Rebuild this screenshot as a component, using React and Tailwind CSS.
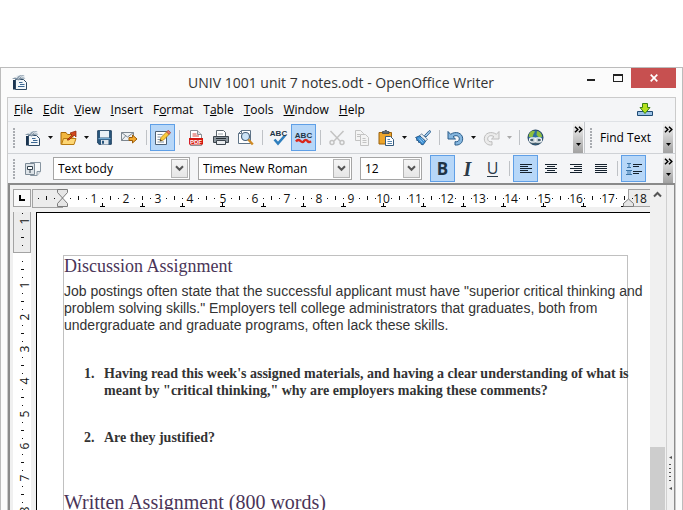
import React from "react";

const range = (n) => Array.from({ length: n }, (_, i) => i);

function Underlined({ text, at = 0 }) {
  return (
    <span className="whitespace-pre">
      {text.slice(0, at)}
      <span className="underline underline-offset-1">{text[at]}</span>
      {text.slice(at + 1)}
    </span>
  );
}

function Grip() {
  return (
    <div className="flex w-[11px] shrink-0 flex-col items-center justify-center gap-px">
      {range(7).map((i) => (
        <span key={i} className="h-[2px] w-[2px] bg-[#a9acb1]" />
      ))}
    </div>
  );
}

function Sep() {
  return (
    <div className="flex w-2 shrink-0 items-center justify-center">
      <span className="h-[15px] w-px bg-[#bfc2c6]" />
    </div>
  );
}

function Tool({ label, active, children }) {
  return (
    <button
      type="button"
      aria-label={label}
      aria-pressed={active ? true : undefined}
      className={
        "flex h-[27px] w-[25px] shrink-0 items-center justify-center border " +
        (active ? "border-[#5f9fe6] bg-[#b7d7f8]" : "border-transparent")
      }
    >
      {children}
    </button>
  );
}

function Drop({ label, dim }) {
  return (
    <button type="button" aria-label={label} className="flex h-[27px] w-[11px] shrink-0 items-center justify-center">
      <svg width="5" height="3" viewBox="0 0 5 3">
        <path d="M0 0h5L2.5 3z" fill={dim ? "#a9a9a9" : "#111"} />
      </svg>
    </button>
  );
}

function More({ label }) {
  return (
    <button
      type="button"
      aria-label={label}
      className="flex w-[10px] shrink-0 flex-col items-center justify-between self-stretch bg-linear-to-b from-[#f6f6f6] to-[#a2a2a2] pt-1 pb-[7px]"
    >
      <svg width="9" height="7" viewBox="0 0 9 7" fill="none" stroke="#000" strokeWidth="1.500">
        <path d="M1 .7l2.800 2.800L1 6.300M5 .7l2.800 2.800L5 6.300" />
      </svg>
      <svg width="5" height="3" viewBox="0 0 5 3">
        <path d="M0 0h5L2.500 3z" fill="#000" />
      </svg>
    </button>
  );
}

function Combo({ label, value, width }) {
  return (
    <div className={"relative flex h-[23px] shrink-0 items-center border border-[#a5a5a5] bg-white " + width}>
      <select
        aria-label={label}
        defaultValue={value}
        className="h-[21px] w-full appearance-none bg-transparent pl-1 text-[12px] leading-5 text-black outline-none"
      >
        <option>{value}</option>
      </select>
      <span className="pointer-events-none absolute inset-y-px right-px flex w-[17px] items-center justify-center border border-[#b4b4b4] bg-linear-to-b from-[#f5f5f5] to-[#e6e6e6]">
        <svg width="9" height="7" viewBox="0 0 9 7" fill="none" stroke="#555" strokeWidth="2">
          <path d="M1 1.200l3.500 3.600L8 1.200" />
        </svg>
      </span>
    </div>
  );
}

/* ---------- icons ---------- */

function WriterIcon() {
  return (
    <svg width="15" height="16" viewBox="0 0 15 16">
      <path d="M4.500 1.500h8v4h-8z" fill="#dfe6ec" />
      <path d="M1 6h3v9.500H1z" fill="#1b3450" />
      <path d="M3.500 5.500h8l3 3v7h-11z" fill="#f3f7fa" stroke="#2f4a64" />
      <path d="M7 8.500h3.500M8 10.500h4.500M6 12.500h6.500" stroke="#3c6893" />
      <path d="M0 5c1.600-1.600 3.200-2 5-1C6.200 1.500 8.800.4 12.500 1.200 10.400 2 9.300 2.800 8.600 4.200 10.300 3.300 12.200 3.400 13.500 4.600 11 4.400 8.600 5 6.600 6.600 4.800 5.200 2.500 4.700 0 5z" fill="#8496a6" />
      <path d="M6.500 4.500C7.500 2.800 9 2 10.500 1.900" fill="none" stroke="#eef2f5" strokeWidth=".9" />
    </svg>
  );
}

function OpenIcon() {
  return (
    <svg width="17" height="16" viewBox="0 0 17 16">
      <path d="M1 14.500V2.500h5l1.500 2H13v3" fill="#f2b73f" stroke="#a86a08" />
      <path d="M1.500 14.500l2-6h12.500l-2 6z" fill="#fdd673" stroke="#b87a10" />
      <path d="M7 10L12 5 10 3 16 1v6l-2-2-5 5z" fill="#d3481d" stroke="#8c2406" strokeWidth=".7" />
    </svg>
  );
}

function SaveIcon() {
  return (
    <svg width="15" height="15" viewBox="0 0 15 15">
      <path d="M.7.700h13.600v13.600H2L.7 13z" fill="#2d5a80" stroke="#1d3f5f" />
      <path d="M3 1h9v6.500H3z" fill="#e9f0f6" />
      <path d="M1.500 8h12v1.200h-12z" fill="#74a9d0" />
      <path d="M4 10h7.500v4.500H4z" fill="#dfe6ec" />
      <path d="M5 10.800h2v3H5z" fill="#27557d" />
    </svg>
  );
}

function MailIcon() {
  return (
    <svg width="17" height="13" viewBox="0 0 17 13">
      <path d="M.5 1.500h12v8H.5z" fill="#eef1f4" stroke="#7d8790" />
      <path d="M.5 1.500l6 4.500 6-4.500M.5 9.500l4-4.500" fill="none" stroke="#7d8790" />
      <path d="M8 6.500h3.500V4l4.500 4-4.500 4V9.500H8z" fill="#f3aa2f" stroke="#9c5c08" />
    </svg>
  );
}

function EditIcon() {
  return (
    <svg width="17" height="17" viewBox="0 0 17 17">
      <path d="M1.500 2.500h11v13h-11z" fill="#fdfdfd" stroke="#4d6074" />
      <path d="M3.500 5.500h5M3.500 8h3M3.500 10.500h2.500M3.500 13h6.500" stroke="#8193a5" />
      <path d="M6 12l1-3.500L13 2.500l2.500 2.500L9.500 11z" fill="#fbcb3b" stroke="#a87a12" strokeWidth=".8" />
      <path d="M12.500 3L14.200 1.200l2.500 2.400L15 5.400z" fill="#e77a6c" stroke="#9c3c32" strokeWidth=".7" />
      <path d="M6 12l.5-1.800 1.400 1.200z" fill="#222" />
    </svg>
  );
}

function PdfIcon() {
  return (
    <svg width="14" height="16" viewBox="0 0 14 16">
      <path d="M1.500.5h7l4 4v11h-11z" fill="#fff" stroke="#8a8f95" />
      <path d="M8.500.5v4h4" fill="#dce1e6" stroke="#8a8f95" />
      <path d="M3.500 4h4M3.500 6h6.500" stroke="#d9463a" />
      <path d="M0 8h14v6.500H0z" fill="#d5180f" />
      <text x="7" y="13.500" textAnchor="middle" fontSize="6" fontWeight="700" fontFamily="Liberation Sans, sans-serif" fill="#fff">PDF</text>
    </svg>
  );
}

function PrintIcon() {
  return (
    <svg width="16" height="15" viewBox="0 0 16 15">
      <path d="M3.500 6.500v-6h7l2 2v4" fill="#fff" stroke="#5c666f" />
      <path d="M.5 6.500h15v6H.5z" fill="#8b959d" stroke="#3d464e" />
      <path d="M3 8.500h10" stroke="#262d33" />
      <path d="M3.500 10.500h9v4h-9z" fill="#e9ecef" stroke="#3d464e" />
      <path d="M5 4h5" stroke="#9aa3aa" />
    </svg>
  );
}

function PreviewIcon() {
  return (
    <svg width="17" height="17" viewBox="0 0 17 17">
      <path d="M4.500 1.500h9v13h-12v-10z" fill="#fff" stroke="#5e7387" />
      <path d="M1.500 4.500h3v-3" fill="none" stroke="#5e7387" />
      <circle cx="8.500" cy="7.500" r="4" fill="#cbe3f6" stroke="#49627a" strokeWidth="1.200" />
      <path d="M11.300 10.500l4.500 5" stroke="#d08a24" strokeWidth="2.400" />
    </svg>
  );
}

function SpellIcon({ auto }) {
  return (
    <svg width="19" height="17" viewBox="-1 0 19 17" className="shrink-0 overflow-visible">
      {auto ? (
        <path d="M1 12.500c1.500-2 3-2 4.500-.5s2.500 1.500 3.500 0 2.500-1.500 3.500 0 2 1.500 3.500.3" fill="none" stroke="#d9261c" strokeWidth="2.400" />
      ) : (
        <path d="M4.500 10.500l3.500 4 7-8" fill="none" stroke="#2f7fbd" strokeWidth="2.600" />
      )}
      <text x="8.500" y={auto ? 9 : 7} textAnchor="middle" fontSize="8" fontWeight="700" fontFamily="Liberation Sans, sans-serif" fill="#1f3446">ABC</text>
    </svg>
  );
}

function CutIcon() {
  return (
    <svg width="16" height="16" viewBox="0 0 16 16" fill="none" stroke="#c3c3c3" strokeWidth="1.500">
      <path d="M1.500 1l9.500 10M14.500 1L5 11" />
      <circle cx="3" cy="12.500" r="2" />
      <circle cx="13" cy="12.500" r="2" />
    </svg>
  );
}

function CopyIcon() {
  return (
    <svg width="16" height="16" viewBox="0 0 16 16" fill="#f4f4f4" stroke="#c3c3c3">
      <path d="M1.500.5h5l3 3v7h-8zM3 4.500h3M3 6.500h3" />
      <path d="M6.500 4.500h5l3 3v8h-8zM8.500 8.500h3M8.500 10.500h4M8.500 12.500h4" />
    </svg>
  );
}

function PasteIcon() {
  return (
    <svg width="17" height="16" viewBox="0 0 17 16">
      <path d="M1 2.500h12.500v11.500H1z" fill="#eda52b" stroke="#9a6210" />
      <path d="M4.500 3.500v-2h1.500l1-1h1.500l1 1H11v2z" fill="#5d6871" stroke="#333c43" strokeWidth=".7" />
      <path d="M7.500 6.500h5l3 3v6h-8z" fill="#fff" stroke="#34597c" />
      <path d="M9.500 9.500h2.500M9.500 11.500h4.500M9.500 13.500h4.500" stroke="#5b86ad" />
    </svg>
  );
}

function BrushIcon() {
  return (
    <svg width="16" height="16" viewBox="0 0 16 16">
      <path d="M9.500 5.500L14 .8c1-.6 2 .4 1.400 1.400L11 7z" fill="#a5cbea" stroke="#23588b" strokeWidth=".9" />
      <path d="M6.500 3.800l6 5.400-1.800 2-6-5.400z" fill="#e8eef3" stroke="#4a6a88" strokeWidth=".8" />
      <path d="M4.700 5.800L.6 7.500 2 9l-.5 1.200 2 .6 0 1.500 2 .3.600 1.700 2 .5 2.500-3.500z" fill="#3b8fd4" stroke="#1d4f80" strokeWidth=".9" />
      <path d="M4 8.500l3.500 4M6 7.500l3 3.500" stroke="#b9dcf6" strokeWidth=".8" />
    </svg>
  );
}

function TurnIcon({ redo }) {
  const edge = redo ? "#bdbdbd" : "#2b5d8a";
  const fill = redo ? "#ebebeb" : "#86b7df";
  return (
    <svg width="17" height="16" viewBox="0 0 17 16">
      <g transform={redo ? "matrix(-1 0 0 1 17 0)" : undefined}>
        <path
          d="M1 1.500v7.500h7.500L6 6.700C8.500 4.800 12.300 5.600 12.300 8.800c0 2.200-1.800 3.300-4.300 2.900V15c4.500.5 7.700-2 7.700-6.200C15.700 2.800 8.500.8 3.600 4.300z"
          fill={fill}
          stroke={edge}
        />
      </g>
    </svg>
  );
}

function GlobeIcon() {
  return (
    <svg width="17" height="17" viewBox="0 0 17 17">
      <circle cx="8.500" cy="8.500" r="7.500" fill="#2d6ea3" stroke="#1f3f5c" />
      <path d="M3 3.500C5 1.500 7 1.500 8 2.500L6.500 5l-1 3L2 8c-.5-1.500 0-3 1-4.500zM10 2c3 .5 5 3 5 6l-3 .5L9.500 6z" fill="#8fbf3e" />
      <path d="M2 10h13v2.500l-3 2.800H5L2 12.500z" fill="#46606f" />
      <rect x="2.500" y="9" width="6.500" height="4" rx="2" fill="none" stroke="#f0f3f5" strokeWidth="1.300" />
      <rect x="8" y="9" width="6.500" height="4" rx="2" fill="none" stroke="#f0f3f5" strokeWidth="1.300" />
      <path d="M6 11h5" stroke="#f0f3f5" strokeWidth="1.300" />
    </svg>
  );
}

function StylesIcon() {
  return (
    <svg width="16" height="16" viewBox="0 0 16 16">
      <path d="M5.500 1.500h10v9l-3.500 4H5.500z" fill="#f4f7f9" stroke="#8795a1" />
      <path d="M12 14.500v-4h3.500" fill="#dfe5ea" stroke="#8795a1" />
      <path d="M.5 2.500h9v11h-9z" fill="#dde3e8" stroke="#7c8a96" />
      <path d="M2.500 5.500h5v3h-5zM5 8.500v3.500" fill="#fff" stroke="#34434f" />
    </svg>
  );
}

function UpdateIcon() {
  return (
    <svg width="16" height="14" viewBox="0 0 16 14">
      <path d="M.5 8.500h15v4H.5z" fill="#9cc3e6" stroke="#1f4a73" />
      <path d="M5.500.5h5v4H13L8 10.500 3 4.500h2.500z" fill="#b5e11e" stroke="#3b8312" />
    </svg>
  );
}

function AlignIcon({ rows }) {
  return (
    <svg width="12" height="11" viewBox="0 0 12 11" stroke="#15222e">
      {rows.map(([a, b], i) => (
        <path key={i} d={`M${a} ${i * 2 + 1.5}H${b}`} />
      ))}
    </svg>
  );
}

function NumberingIcon() {
  return (
    <svg width="16" height="14" viewBox="0 0 16 14" fill="none">
      <path d="M1 1.500h4M3 1.500v4M1 5.500h4M0 8.500h6M2 8.500v4M4 8.500v4M0 12.500h6" stroke="#3b75a8" />
      <path d="M7 2.500h9M7 4.500h6M7 9.500h9M7 11.500h6" stroke="#15222e" />
    </svg>
  );
}

/* ---------- rulers ---------- */

const UNIT = 32.1;
const TAB = 40.1;

function HorizontalRuler() {
  const zero = 30;
  return (
    <svg className="block h-[20px] w-[617px] max-w-none overflow-visible" viewBox="0 0 617 20" fontFamily="Open Sans, sans-serif" fontSize="12" shapeRendering="crispEdges">
      <rect x="0" y="0" width="617" height="18" fill="#fff" />
      <path d="M0 .5H30V18H0z" fill="#ececec" stroke="#a3a3a3" />
      <path d="M596.500 .5H618V17.500H596.500z" fill="#ececec" stroke="#a3a3a3" />
      {range(3).map((i) => (
        <rect key={i} x={6 + i * 8} y={i === 1 ? 7 : 9} width="1" height={i === 1 ? 4 : 1} fill="#111" />
      ))}
      {range(18).map((n) => {
        const x = zero + n * UNIT;
        return (
          <g key={n} fill="#111">
            <rect x={Math.round(x + UNIT / 4)} y="9" width="1" height="1" />
            <rect x={Math.round(x + UNIT / 2)} y="7" width="1" height="4" />
            <rect x={Math.round(x + (UNIT * 3) / 4)} y="9" width="1" height="1" />
            <text x={Math.round(x + UNIT)} y="14" textAnchor="middle">{n + 1}</text>
          </g>
        );
      })}
      {range(14).map((i) => {
        const x = Math.round(zero + (i + 1) * TAB);
        return <path key={i} d={`M${x - 2} 17.500h5M${x + 0.5} 14v3`} stroke="#000" />;
      })}
      <g fill="#e6e6e6" stroke="#7c7c7c" shapeRendering="auto">
        <path d="M25.500 .5h10v3l-5 5.500-5-5.500zM25.500 17.500h10v-3l-5-5.500-5 5.500z" />
        <path d="M591.500 17.500h10v-3l-5-4.500-5 4.500z" />
      </g>
    </svg>
  );
}

function VerticalRuler() {
  const zero = 41;
  return (
    <svg className="block h-[306px] w-[18px] overflow-visible" viewBox="0 0 18 306" fontFamily="Open Sans, sans-serif" fontSize="12" shapeRendering="crispEdges">
      <rect x="0" y="0" width="18" height="306" fill="#fff" />
      <path d="M0 0h18v41H0z" fill="#ececec" />
      <path d="M.5 0V40.500H17.500V0" fill="none" stroke="#a3a3a3" />
      {[1, 17, 33].map((y) => (
        <rect key={y} x={9} y={y} width="1" height="1" fill="#111" />
      ))}
      <rect x="8" y="25" width="3" height="1" fill="#111" />
      <text transform="translate(16 9) rotate(-90)" textAnchor="middle" fill="#111">1</text>
      {range(8).map((n) => {
        const y = zero + n * UNIT;
        return (
          <g key={n} fill="#111">
            <rect x="9" y={Math.round(y + UNIT / 4)} width="1" height="1" />
            <rect x="8" y={Math.round(y + UNIT / 2)} width="3" height="1" />
            <rect x="9" y={Math.round(y + (UNIT * 3) / 4)} width="1" height="1" />
            <text transform={`translate(16 ${Math.round(y + UNIT)}) rotate(-90)`} textAnchor="middle">{n + 1}</text>
          </g>
        );
      })}
    </svg>
  );
}

/* ---------- window parts ---------- */

function TitleBar() {
  return (
    <header className="flex h-[29px] shrink-0 items-start pl-[11px] pr-[6px]">
      <div className="w-[98px] pt-[6px]">
        <WriterIcon />
      </div>
      <h1 className="flex-1 whitespace-nowrap pt-[5px] text-center text-[14px] leading-5 text-[#333]">
        UNIV 1001 unit 7 notes.odt - OpenOffice Writer
      </h1>
      <div className="flex w-[104px] justify-end">
        <button type="button" aria-label="Minimize" className="flex h-5 w-[27px] items-center justify-center pt-1">
          <span className="h-[2px] w-2 bg-[#222]" />
        </button>
        <button type="button" aria-label="Maximize" className="flex h-5 w-[27px] items-center justify-center">
          <span className="h-[8px] w-[10px] border border-t-2 border-[#222]" />
        </button>
        <button type="button" aria-label="Close" className="flex h-5 w-[45px] items-center justify-center bg-[#c75050]">
          <svg width="8" height="8" viewBox="0 0 8 8" stroke="#fff" strokeWidth="1.700">
            <path d="M.7.700l6.600 6.600M7.300.700L.7 7.300" />
          </svg>
        </button>
      </div>
    </header>
  );
}

const MENUS = [
  ["File", 0],
  ["Edit", 0],
  ["View", 0],
  ["Insert", 0],
  ["Format", 1],
  ["Table", 1],
  ["Tools", 0],
  ["Window", 0],
  ["Help", 0],
];

function MenuBar() {
  return (
    <nav className="flex h-[23px] shrink-0 items-center gap-[10px] bg-[#f4f5f7] pl-[6px] pr-[22px]">
      {MENUS.map(([text, at]) => (
        <button key={text} type="button" className="text-[12px] leading-4 text-black">
          <Underlined text={text} at={at} />
        </button>
      ))}
      <button type="button" aria-label="Updates available" className="ml-auto">
        <UpdateIcon />
      </button>
    </nav>
  );
}

function StandardToolbar() {
  return (
    <div className="flex h-8 shrink-0 items-center border-t border-[#dfe2e6] bg-[#f4f5f7] pr-[2px]">
      <Grip />
      <div className="flex flex-1 items-center pl-px">
        <Tool label="New"><WriterIcon /></Tool>
        <Drop label="New options" />
        <Tool label="Open"><OpenIcon /></Tool>
        <Drop label="Recent files" />
        <Tool label="Save"><SaveIcon /></Tool>
        <Tool label="Document as e-mail"><MailIcon /></Tool>
        <Sep />
        <Tool label="Edit file" active><EditIcon /></Tool>
        <Sep />
        <Tool label="Export as PDF"><PdfIcon /></Tool>
        <Tool label="Print"><PrintIcon /></Tool>
        <Tool label="Page preview"><PreviewIcon /></Tool>
        <Sep />
        <Tool label="Spelling"><SpellIcon /></Tool>
        <Tool label="AutoSpellcheck" active><SpellIcon auto /></Tool>
        <Sep />
        <Tool label="Cut"><CutIcon /></Tool>
        <Tool label="Copy"><CopyIcon /></Tool>
        <Tool label="Paste"><PasteIcon /></Tool>
        <Drop label="Paste options" />
        <Tool label="Format paintbrush"><BrushIcon /></Tool>
        <Sep />
        <Tool label="Undo"><TurnIcon /></Tool>
        <Drop label="Undo steps" />
        <Tool label="Redo"><TurnIcon redo /></Tool>
        <Drop label="Redo steps" dim />
        <Sep />
        <Tool label="Hyperlink"><GlobeIcon /></Tool>
      </div>
      <More label="More standard tools" />
      <div className="ml-px flex w-[89px] shrink-0 items-center self-stretch border-l border-[#c4c7cb]">
        <Grip />
        <button type="button" className="flex-1 whitespace-nowrap pl-1 text-left text-[12px] leading-4 text-black">
          Find Text
        </button>
        <More label="More find tools" />
      </div>
    </div>
  );
}

function FormattingToolbar() {
  return (
    <div className="flex h-[30px] shrink-0 items-center border-t border-[#cfd2d6] bg-[#f4f5f7] pr-[2px]">
      <Grip />
      <div className="flex flex-1 items-center pl-px">
        <Tool label="Styles and formatting"><StylesIcon /></Tool>
        <div className="flex gap-2 pl-2 pr-2">
          <Combo label="Paragraph style" value="Text body" width="w-[137px]" />
          <Combo label="Font name" value="Times New Roman" width="w-[154px]" />
          <Combo label="Font size" value="12" width="w-[62px]" />
        </div>
        <Tool label="Bold" active><span className="text-[17px] font-bold leading-5 text-[#1f3446]">B</span></Tool>
        <Tool label="Italic"><span className="font-['Liberation_Serif',serif] text-[20px] font-bold italic leading-5 text-[#2b3b49]">I</span></Tool>
        <Tool label="Underline"><span className="border-b border-[#2b3b49] text-[16px] leading-4 text-[#2b3b49]">U</span></Tool>
        <Sep />
        <Tool label="Align left" active><AlignIcon rows={[[0, 12], [0, 8], [0, 12], [0, 8], [0, 12]]} /></Tool>
        <Tool label="Centered"><AlignIcon rows={[[0, 12], [2, 10], [0, 12], [2, 10], [0, 12]]} /></Tool>
        <Tool label="Align right"><AlignIcon rows={[[0, 12], [4, 12], [0, 12], [4, 12], [0, 12]]} /></Tool>
        <Tool label="Justified"><AlignIcon rows={[[0, 12], [0, 12], [0, 12], [0, 12], [0, 12]]} /></Tool>
        <Sep />
        <Tool label="Numbering" active><NumberingIcon /></Tool>
      </div>
      <More label="More formatting tools" />
    </div>
  );
}

function Page() {
  return (
    <article className="min-h-0 min-w-0 flex-1 overflow-hidden border-l border-t border-black bg-white pl-[26px] pr-[22px] pt-[42px]">
      <div className="h-full border border-b-0 border-[#c0c0c0]">
        <h2 className="font-['Liberation_Serif',serif] text-[18px] leading-5 text-[#4a3558]">Discussion Assignment</h2>
        <p className="mt-[7px] whitespace-nowrap font-['Liberation_Sans',sans-serif] text-[14px] leading-[17px] text-[#333]">
          Job postings often state that the successful applicant must have "superior critical thinking and
          <br />
          problem solving skills." Employers tell college administrators that graduates, both from
          <br />
          undergraduate and graduate programs, often lack these skills.
        </p>
        <ol className="mt-[31px] flex flex-col gap-[30px] whitespace-nowrap font-['Liberation_Serif',serif] text-[14px] font-bold leading-[17px] text-[#333]">
          <li className="flex">
            <span className="w-10 shrink-0 pl-5">1.</span>
            <span>
              Having read this week's assigned materials, and having a clear understanding of what is
              <br />
              meant by "critical thinking," why are employers making these comments?
            </span>
          </li>
          <li className="flex">
            <span className="w-10 shrink-0 pl-5">2.</span>
            <span>Are they justified?</span>
          </li>
        </ol>
        <h2 className="mt-[46px] font-['Liberation_Serif',serif] text-[20px] leading-5 text-[#4a3558]">
          Written Assignment (800 words)
        </h2>
      </div>
    </article>
  );
}

function SidebarHandle() {
  return (
    <button type="button" aria-label="Show sidebar" className="flex w-[9px] shrink-0 flex-col items-center justify-end border-l border-r border-[#d0d0d0] border-r-[#8c8c8c] bg-[#f0f0f0] pb-[19px]">
      <svg width="3" height="35" viewBox="0 0 3 35" fill="#555">
        <path d="M0 1.500L3 0v3z" />
        <path d="M0 8h2v1H0zM0 12h2v1H0zM0 16h2v1H0zM0 20h2v1H0zM0 24h2v1H0z" />
        <path d="M0 32.500L3 31v3z" />
      </svg>
    </button>
  );
}

function Workspace() {
  return (
    <main className="flex min-h-0 flex-1 border-l-2 border-t-2 border-[#8a8a8a] bg-[#f0f0f0]">
      <div className="flex min-w-0 flex-1 flex-col">
        <div className="flex h-[27px] shrink-0 pt-1 pl-[3px]">
          <button type="button" aria-label="Tab stop type" className="mr-px flex h-[18px] w-[18px] shrink-0 items-center justify-center border border-[#a3a3a3] bg-[#fafafa]">
            <span className="h-[6px] w-[6px] border-b-2 border-l-2 border-black" />
          </button>
          <div className="min-w-0 flex-1 overflow-hidden">
            <HorizontalRuler />
          </div>
        </div>
        <div className="flex min-h-0 flex-1 pl-[3px]">
          <div className="mr-[5px] w-[18px] shrink-0">
            <VerticalRuler />
          </div>
          <Page />
        </div>
      </div>
      <div className="flex w-4 shrink-0 flex-col bg-[#f0f0f0] pr-px">
        <button type="button" aria-label="Scroll up" className="flex h-[19px] items-center justify-center">
          <svg width="9" height="7" viewBox="0 0 9 7" fill="none" stroke="#555" strokeWidth="2">
            <path d="M1 5.500L4.500 2 8 5.500" />
          </svg>
        </button>
        <div className="flex flex-1 flex-col justify-end">
          <div className="h-[63px] bg-[#cdcdcd]" />
        </div>
      </div>
      <SidebarHandle />
    </main>
  );
}

export default function App() {
  return (
    <div className="flex h-screen flex-col overflow-hidden bg-white pt-[67px] font-['Open_Sans','Noto_Sans',sans-serif]">
      <div className="flex min-h-0 flex-1 flex-col border-x border-t border-[#bcbcbc] bg-[#fbfbfb]">
        <TitleBar />
        <div className="ml-[6px] mr-[6px] flex min-h-0 flex-1 flex-col border-x border-t border-[#cbcbcb]">
          <MenuBar />
          <StandardToolbar />
          <FormattingToolbar />
          <Workspace />
        </div>
      </div>
    </div>
  );
}
